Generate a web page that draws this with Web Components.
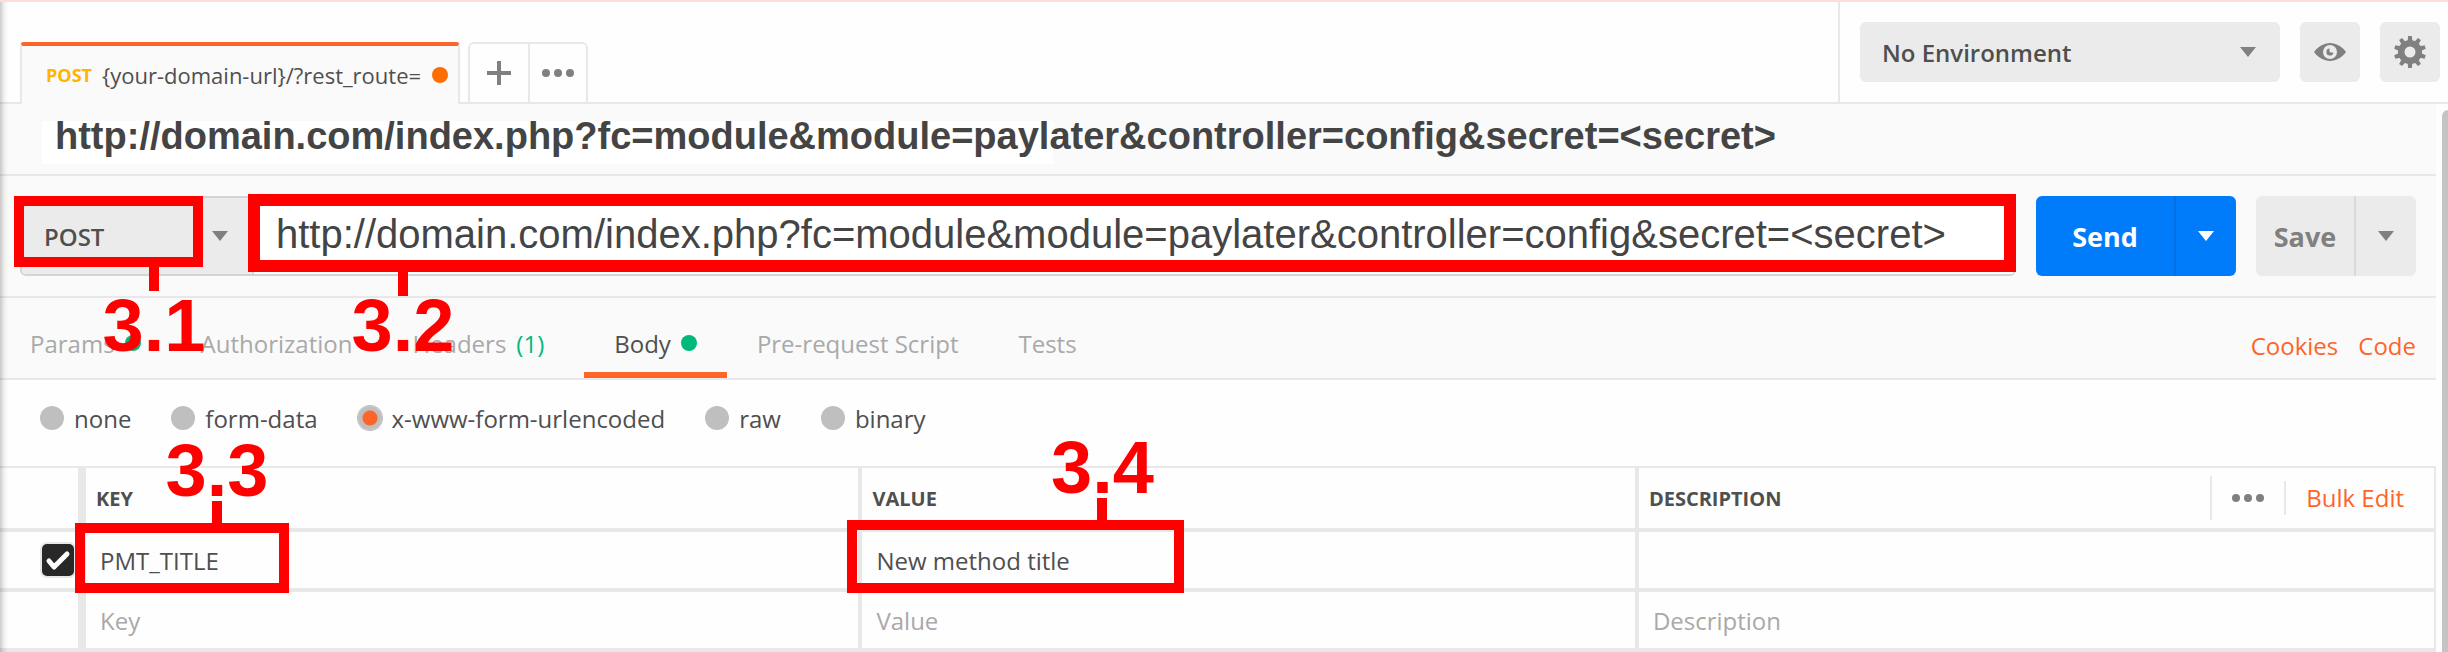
<!DOCTYPE html>
<html lang="en">
<head>
<meta charset="utf-8">
<title>API client</title>
<style>
  body { margin: 0; background: #fefefe; font-family: "Open Sans", sans-serif; font-size: 24px; color: #4f4f4f; }
</style>
</head>
<body>
<api-client></api-client>

<template id="caret-select">
  <style>
    :host { display: grid; align-items: center; background: #ebebeb; }
    select, svg { grid-area: 1 / 1; }
    select { appearance: none; width: 100%; height: 100%; border: 0; margin: 0; background: none; padding: 0 48px 0 22px;
      font: 600 24px "Open Sans", sans-serif; color: #4f4f4f; }
    svg { justify-self: end; margin-right: 24px; pointer-events: none; fill: #808080; }
  </style>
  <select></select>
  <svg width="16" height="10" viewBox="0 0 16 10"><path d="M0 0h16L8 10z"/></svg>
</template>

<template id="call-out">
  <style>
    :host { position: absolute; z-index: 2; pointer-events: none; color: #f00; }
    .frame { position: absolute; inset: 0; border: var(--line, 10px) solid; }
    .tail { position: absolute; left: var(--tail-x); top: 100%; width: 10px; display: flex; flex-direction: column; align-items: center; }
    .stem { width: 10px; height: 24px; background: currentColor; }
    .label { font: bold 74px/74px "Liberation Sans", sans-serif; margin-top: calc(var(--gap, 20px) - 24px); white-space: nowrap; }
    :host([above]) .tail { top: auto; bottom: 100%; flex-direction: column-reverse; }
    :host([above]) .stem { height: 22px; }
    :host([above]) .label { margin: 0 0 -7px; }
  </style>
  <div class="frame"></div>
  <div class="tail"><div class="stem"></div><div class="label"><slot></slot></div></div>
</template>

<template id="split-button">
  <style>
    :host { display: flex; height: 80px; border-radius: 6px; overflow: hidden; background: #ebebeb; color: #808080; --rule: #d9d9d9; }
    :host([primary]) { background: #007bf9; color: #fff; --rule: #0070e4; }
    button { border: 0; padding: 0; background: none; color: inherit; font: 700 27px "Open Sans", sans-serif; }
    .main { flex: 1; }
    .more { width: 62px; border-left: 2px solid var(--rule); display: flex; align-items: center; justify-content: center; fill: currentColor; }
  </style>
  <button class="main"><slot></slot></button>
  <button class="more" aria-label="More options"><svg width="16" height="10" viewBox="0 0 16 10"><path d="M0 0h16L8 10z"/></svg></button>
</template>

<template id="top-bar">
  <style>
    :host { display: flex; align-items: flex-end; height: 102px; background: #fefefe; box-shadow: inset 0 -2px #e8e8e8; }
    .tab { box-sizing: border-box; width: 440px; height: 62px; margin-left: 20px; padding: 0 10px 0 24px; display: flex; align-items: center;
      background: #fafafa; border: 2px solid #e8e8e8; border-width: 4px 2px 0; border-top-color: #ff6428; border-radius: 4px 4px 0 0; }
    .tab b { font-size: 18px; color: #ffb400; margin-right: 10px; }
    .tab span { font-size: 22px; }
    .tab i { width: 16px; height: 16px; border-radius: 50%; background: #ff6c00; margin-left: auto; }
    .tools { display: flex; box-sizing: border-box; height: 62px; margin-left: 8px; border: 2px solid #e8e8e8; border-radius: 6px 6px 0 0; }
    .tools button { width: 58px; padding: 0; border: 0; background: none; display: grid; place-items: center; fill: #808080; }
    .tools button + button { border-left: 2px solid #e8e8e8; }
    .env { display: flex; gap: 20px; margin: 0 0 2px auto; padding: 20px 8px 20px 20px; border-left: 2px solid #e8e8e8; }
    caret-select { width: 420px; height: 60px; border-radius: 6px; }
    .env button { width: 60px; height: 60px; padding: 0; border: 0; border-radius: 6px; background: #ebebeb; display: grid; place-items: center; }
  </style>
  <div class="tab"><b>POST</b><span>{your-domain-url}/?rest_route=</span><i></i></div>
  <div class="tools">
    <button aria-label="New tab"><svg width="24" height="24"><path d="M10 0h4v10h10v4H14v10h-4V14H0v-4h10z"/></svg></button>
    <button aria-label="Tab options"><svg width="32" height="8"><circle cx="4" cy="4" r="4"/><circle cx="16" cy="4" r="4"/><circle cx="28" cy="4" r="4"/></svg></button>
  </div>
  <div class="env">
    <caret-select label="Environment" options="No Environment"></caret-select>
    <button aria-label="Environment quick look">
      <svg width="32" height="20" viewBox="0 0 32 20"><path fill="#808080" d="M0 10C4 4.500 10 1 16 1s12 3.500 16 9c-4 5.500-10 9-16 9S4 15.500 0 10z"/><circle cx="16" cy="10" r="7" fill="#ebebeb"/><path fill="#808080" d="M15.500 6.600A3.500 3.500 0 1 0 19.400 10.500H16.500L15.500 9.500z"/></svg>
    </button>
    <button aria-label="Settings">
      <svg width="32" height="32" viewBox="-16 -16 32 32"><g fill="#808080">
        <path id="t" d="M-2.500-10L-1.800-16H1.800L2.500-10V10L1.800 16H-1.800L-2.500 10z"/>
        <use href="#t" transform="rotate(36)"/><use href="#t" transform="rotate(72)"/><use href="#t" transform="rotate(108)"/><use href="#t" transform="rotate(144)"/>
        <circle r="12"/></g><circle r="5.500" fill="#ebebeb"/></svg>
    </button>
  </div>
</template>

<template id="request-line">
  <style>
    :host { display: flex; gap: 20px; padding: 20px; border-bottom: 2px solid #e8e8e8; }
    .field { position: relative; flex: 1; }
    .group { box-sizing: border-box; height: 80px; display: flex; border: 2px solid #d4d4d4; border-radius: 6px; overflow: hidden; }
    caret-select { width: 230px; border-right: 2px solid #d4d4d4; }
    input { flex: 1; min-width: 0; border: 0; padding: 0 22px 4px; background: #fff; font: 40px "Liberation Sans", sans-serif; color: #444; }
    .method { left: -6px; top: 0; width: 189px; height: 71px; --tail-x: 135px; --gap: 22px; }
    .url { left: 228px; right: 0; top: -2px; height: 78px; --line: 12px; --tail-x: 150px; --gap: 17px; }
    .send { width: 200px; }
    .save { width: 160px; }
  </style>
  <div class="field">
    <div class="group">
      <caret-select label="Method" options="POST"></caret-select>
      <input type="text" aria-label="Request URL" value="http://domain.com/index.php?fc=module&amp;module=paylater&amp;controller=config&amp;secret=&lt;secret&gt;">
    </div>
    <call-out class="method">3.1</call-out>
    <call-out class="url">3.2</call-out>
  </div>
  <split-button class="send" primary>Send</split-button>
  <split-button class="save">Save</split-button>
</template>

<template id="request-tabs">
  <style>
    :host { display: flex; height: 80px; border-bottom: 2px solid #e8e8e8; }
    button { display: flex; align-items: center; gap: 10px; padding: 16px 30px 0; border: 0; border-bottom: 6px solid transparent;
      background: none; font: 24px "Open Sans", sans-serif; color: #a9a9a9; }
    button.on { color: #4f4f4f; border-bottom-color: #ff6428; }
    i { width: 16px; height: 16px; border-radius: 50%; background: #00b87c; }
    em { font-style: normal; color: #00b87c; margin-right: 10px; }
    nav { display: flex; align-items: center; gap: 20px; margin-left: auto; padding: 14px 20px 0 0; }
    a { color: #ff6428; text-decoration: none; }
  </style>
  <button>Params<i></i></button>
  <button>Authorization</button>
  <button>Headers<em>(1)</em></button>
  <button class="on">Body<i></i></button>
  <button>Pre-request Script</button>
  <button>Tests</button>
  <nav><a href="#cookies">Cookies</a><a href="#code">Code</a></nav>
</template>

<template id="body-type">
  <style>
    :host { display: flex; gap: 40px; height: 76px; padding: 0 40px 10px; background: #fefefe; }
    label { display: flex; align-items: center; gap: 10px; }
    input { appearance: none; width: 24px; height: 24px; margin: 0; border-radius: 50%; background: #bfbfbf; }
    input:checked { background: radial-gradient(circle, #ff6428 7px, #bfbfbf 8px); box-shadow: 0 0 0 1px #bfbfbf; }
  </style>
  <label><input type="radio" name="type">none</label>
  <label><input type="radio" name="type">form-data</label>
  <label><input type="radio" name="type" checked>x-www-form-urlencoded</label>
  <label><input type="radio" name="type">raw</label>
  <label><input type="radio" name="type">binary</label>
</template>

<template id="param-table">
  <style>
    :host { display: block; background: #fefefe; }
    table { width: 100%; table-layout: fixed; border-spacing: 0; border-top: 2px solid #e8e8e8; border-right: 2px solid #e8e8e8; }
    .tick { width: 86px; }
    .text { width: 31.9%; }
    th, td { box-sizing: border-box; position: relative; height: 60px; padding: 0; border: 0 solid #e8e8e8; border-width: 0 4px 4px 0; text-align: left; }
    th { height: 64px; padding: 0 10px; font-size: 20px; }
    tr > :first-child { border-right-width: 8px; }
    tr > :last-child { border-right-width: 0; padding-right: 0; }
    input[type=text] { display: block; box-sizing: border-box; width: 100%; height: 56px; border: 0; padding: 0 14px; background: none;
      font: 24px "Open Sans", sans-serif; color: #4f4f4f; }
    input::placeholder { color: #a9a9a9; opacity: 1; }
    .check { display: grid; justify-content: end; align-items: center; padding-right: 4px; }
    .check > * { grid-area: 1 / 1; width: 32px; height: 32px; margin: 0; }
    .check input { appearance: none; border-radius: 5px; background: #282828; box-shadow: 0 0 0 2px #e8e8e8; }
    .check svg { pointer-events: none; z-index: 1; }
    .head { display: flex; align-items: center; height: 60px; }
    .tools { display: flex; align-items: center; height: 44px; margin-left: auto; padding-right: 30px; border-left: 2px solid #e8e8e8; }
    button { border: 0; background: none; padding: 0 20px; height: 34px; fill: #808080; display: flex; align-items: center; }
    a { font-size: 24px; font-weight: 400; line-height: 34px; padding-left: 20px; border-left: 2px solid #e8e8e8; color: #ff6428; text-decoration: none; }
    .key { left: -11px; top: -9px; width: 214px; height: 70px; --tail-x: 137px; }
    .value { left: -15px; top: -12px; width: 337px; height: 73px; --tail-x: 250px; }
  </style>
  <table>
    <colgroup><col class="tick"><col class="text"><col class="text"><col></colgroup>
    <thead><tr>
      <th aria-label="Enabled"></th><th>KEY</th><th>VALUE</th>
      <th><div class="head">DESCRIPTION
        <div class="tools">
          <button aria-label="Columns"><svg width="32" height="8"><circle cx="4" cy="4" r="4"/><circle cx="16" cy="4" r="4"/><circle cx="28" cy="4" r="4"/></svg></button>
          <a href="#bulk">Bulk Edit</a>
        </div></div></th>
    </tr></thead>
    <tbody>
      <tr>
        <td><label class="check"><input type="checkbox" checked aria-label="Use PMT_TITLE"><svg viewBox="0 0 32 32" fill="none" stroke="#fff" stroke-width="5" stroke-linecap="round" stroke-linejoin="round"><path d="M7 17l5 6L25 10"/></svg></label></td>
        <td><input type="text" aria-label="Key" value="PMT_TITLE"><call-out class="key" above>3.3</call-out></td>
        <td><input type="text" aria-label="Value" value="New method title"><call-out class="value" above>3.4</call-out></td>
        <td><input type="text" aria-label="Description"></td>
      </tr>
      <tr>
        <td></td>
        <td><input type="text" aria-label="New key" placeholder="Key"></td>
        <td><input type="text" aria-label="New value" placeholder="Value"></td>
        <td><input type="text" aria-label="New description" placeholder="Description"></td>
      </tr>
    </tbody>
  </table>
</template>

<template id="api-client">
  <style>
    :host { display: block; position: relative; border-top: 2px solid #ffdcdc; }
    :host::before { content: ""; position: absolute; z-index: 1; inset: 0 auto 0 0; width: 8px; pointer-events: none;
      background: linear-gradient(90deg, rgba(0,0,0,.2), rgba(0,0,0,.06) 50%, transparent); }
    .work { display: flex; }
    main { flex: 1; min-width: 0; background: #fafafa; }
    .title { padding: 17px 0 10px 42px; border-bottom: 2px solid #e8e8e8; }
    h1 { margin: 0; padding: 0 0 13px 13px; font: bold 38px/30px "Liberation Sans", sans-serif; color: #444; white-space: nowrap;
      background: linear-gradient(#fff, #fff) no-repeat 0 0 / 1011px 100%; }
    .gutter { width: 6px; padding: 6px 0 0 6px; display: flex; background: #fefefe; }
    .thumb { flex: 1; background: #c4c4c4; border-radius: 6px 0 0 0; }
  </style>
  <top-bar></top-bar>
  <div class="work">
    <main>
      <div class="title"><h1>http://domain.com/index.php?fc=module&amp;module=paylater&amp;controller=config&amp;secret=&lt;secret&gt;</h1></div>
      <request-line></request-line>
      <request-tabs></request-tabs>
      <body-type></body-type>
      <param-table></param-table>
    </main>
    <div class="gutter"><div class="thumb"></div></div>
  </div>
</template>

<script>
  class TemplateElement extends HTMLElement {
    constructor() {
      super();
      const template = document.getElementById(this.localName);
      this.attachShadow({ mode: "open" }).append(template.content.cloneNode(true));
    }
  }

  class CaretSelect extends TemplateElement {
    connectedCallback() {
      const select = this.shadowRoot.querySelector("select");
      select.setAttribute("aria-label", this.getAttribute("label"));
      select.replaceChildren(...this.getAttribute("options").split("|").map(text => new Option(text)));
    }
  }

  customElements.define("caret-select", CaretSelect);
  for (const name of ["call-out", "split-button", "top-bar", "request-line", "request-tabs", "body-type", "param-table", "api-client"]) {
    customElements.define(name, class extends TemplateElement {});
  }
</script>
</body>
</html>
